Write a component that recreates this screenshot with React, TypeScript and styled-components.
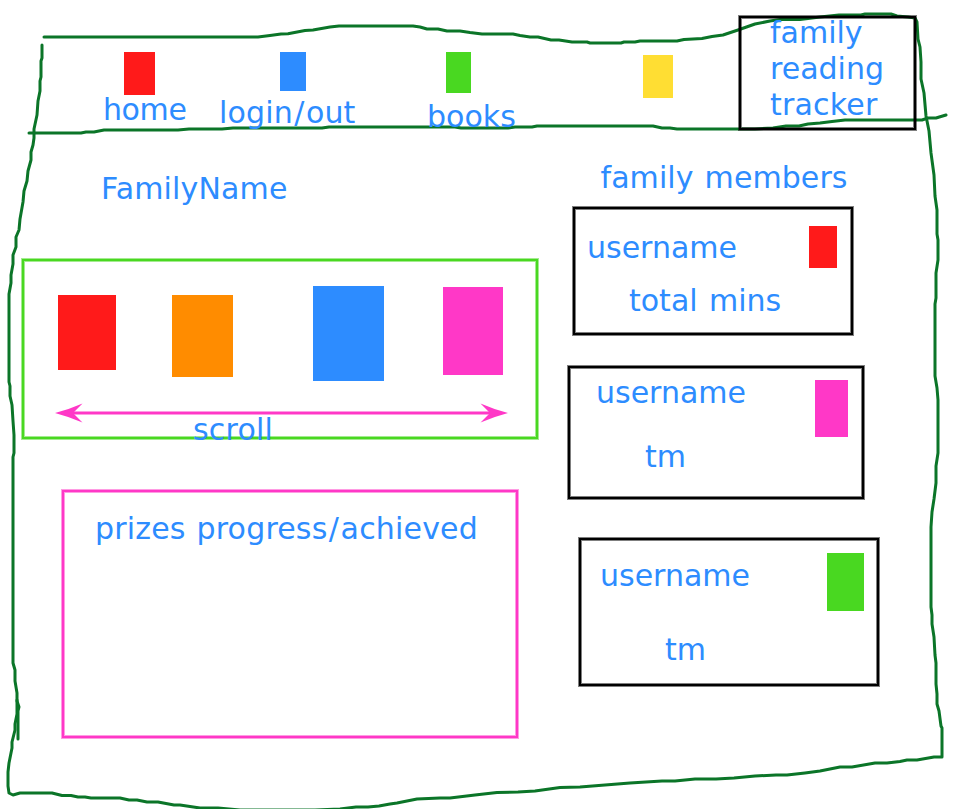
import React from "react";
import styled, { createGlobalStyle } from "styled-components";

const colors = {
  red: "#ff1a1a",
  blue: "#2d8cff",
  green: "#49d821",
  yellow: "#ffde33",
  orange: "#ff8c00",
  pink: "#ff38c7",
  forest: "#0b7528",
};

const GlobalStyle = createGlobalStyle`
  *, *::before, *::after { box-sizing: border-box; }
  body { margin: 0; background: #fff; overflow: hidden; }
`;

const Page = styled.div`
  position: relative;
  width: 966px;
  height: 809px;
  overflow: hidden;
  background: #fff;
  color: ${colors.blue};
  font: 30px/36px Verdana, "DejaVu Sans", sans-serif;
  white-space: nowrap;
`;

const SketchFrame = styled.svg`
  position: absolute;
  inset: 0;
  fill: none;
  stroke: ${colors.forest};
  stroke-width: 3;
  stroke-linecap: round;
  stroke-linejoin: round;
`;

const Header = styled.header`
  position: relative;
  display: flex;
  height: 130px;
  padding: 16px 50px 0 102px;
`;

const Nav = styled.nav`
  display: flex;
  align-items: flex-start;
  width: 637px;
  padding-top: 36px;
`;

const NavItem = styled.div<{ $width: number; $top?: number }>`
  display: flex;
  flex-direction: column;
  flex: none;
  width: ${(p) => p.$width}px;
  padding-top: ${(p) => p.$top ?? 0}px;
`;

const Swatch = styled.div<{
  $color: string;
  $w: number;
  $h: number;
  $left?: number;
  $top?: number;
}>`
  flex: none;
  width: ${(p) => p.$w}px;
  height: ${(p) => p.$h}px;
  margin: ${(p) => p.$top ?? 0}px 0 0 ${(p) => p.$left ?? 0}px;
  background: ${(p) => p.$color};
`;

const Label = styled.span<{ $left?: number; $top?: number; $track?: number; $word?: number }>`
  display: block;
  margin: ${(p) => p.$top ?? 0}px 0 0 ${(p) => p.$left ?? 0}px;
  letter-spacing: ${(p) => p.$track ?? 0}px;
  word-spacing: ${(p) => p.$word ?? 0}px;
`;

const Slash = styled.span`
  padding: 0 1.5px 0 1.3px;
`;

const Outline = styled.section<{
  $color: string;
  $soft: string;
  $w: number;
  $h: number;
}>`
  flex: none;
  width: ${(p) => p.$w}px;
  height: ${(p) => p.$h}px;
  border: 2px solid ${(p) => p.$color};
  box-shadow: 0 0 0 1px ${(p) => p.$soft}, inset 0 0 0 1px ${(p) => p.$soft};
`;

const Brand = styled(Outline)`
  padding: 0 0 0 29px;
`;

const BrandText = styled.div`
  margin-top: -3px;
`;

const Main = styled.main`
  position: relative;
  display: grid;
  grid-template-columns: 568px 1fr;
`;

const Left = styled.div`
  display: flex;
  flex-direction: column;
  align-items: flex-start;
  padding: 41px 0 0 22px;
`;

const Right = styled.div`
  display: flex;
  flex-direction: column;
  align-items: flex-start;
  padding-top: 30px;
`;

const Shelf = styled(Outline)`
  margin-top: 52px;
`;

const Books = styled.div`
  display: flex;
  align-items: flex-start;
  height: 118px;
  padding: 25px 0 0 34px;
`;

const Arrow = styled.svg`
  display: block;
  margin: 24px 0 0 31px;
`;

const Prizes = styled(Outline)`
  margin: 51px 0 0 40px;
  padding: 19px 0 0 31px;
`;

const Member = styled(Outline)<{ $left: number; $top: number }>`
  display: flex;
  justify-content: space-between;
  align-items: flex-start;
  margin: ${(p) => p.$top}px 0 0 ${(p) => p.$left}px;
`;

const MemberText = styled.div`
  display: flex;
  flex-direction: column;
`;

const MemberPhoto = styled.div<{ $right: number }>`
  padding-right: ${(p) => p.$right}px;
`;

const black = { $color: "#000", $soft: "rgba(0,0,0,.5)" };
const lime = { $color: colors.green, $soft: "rgba(73,216,33,.5)" };
const magenta = { $color: colors.pink, $soft: "rgba(255,56,199,.5)" };

const members = [
  { box: [280, 128, 5, 11], name: [12, 21], stat: ["total mins", 54, 17], photo: [colors.red, 28, 42, 17, 14] },
  { box: [296, 133, 0, 31], name: [26, 7], stat: ["tm", 75, 28], photo: [colors.pink, 33, 57, 12, 14] },
  { box: [300, 148, 11, 39], name: [19, 18], stat: ["tm", 84, 38], photo: [colors.green, 37, 58, 13, 13] },
] as const;

export default function App() {
  return (
    <Page>
      <GlobalStyle />
      <SketchFrame width="966" height="809" viewBox="0 0 966 809" aria-hidden="true">
        <path d="M44 37H258L270 35.5L281 34L288 33.8L305 30.5L313 30L330 27L339 26H413L420 27L427 29H438L447 31H460L470 32.5L482 34H513L520 35.5L530 37H538L551 40H559L572 42H587L590 43H621L624 42H635L640 41H677L684 39.5L702 38.5L712 36.5L723 35L738 30L755 24L770 21L780 19.5H800L820 17L839 15H861L865 14H891L897 16L908 17L915 18L917 22L918 39L920 47L921 62L921 79L924 93L926 116L929 131L931 153L934 175L935 196L937 210L937 234L938 240V260L936 273L936 298L935 304V376L937 388L938 400V453L936 466V483L934 499L932 512L931 527V607L932 615V624L934 637L935 655L936 663V684L937 694V704L939 711L941 726L942 728V757H934L917 760H907L900 761.5L887 763H875L852 767H840L830 769L820 771L805 773L787 775H776L755 776L734 778L716 779H695L675 781H662L630 783L580 787L560 787.5L535 791L518 792L497 792.5L475 795L450 798H440L417 799L397 803L390 804L379 806L368 807H356L340 809L315 810H240L218 808H200L180 805L174 805L158 802H147L137 800H129L120 798H91L85 797H78L71 795.5H62L52 793H20L13 795L9 793L8 786V772L9 763L12 748L12 742L15 730L15 724L17 714V700" />
        <path d="M42 45V58L41 61V77L40 81V91L38 101L37 115L34 129V138L33 145L31 152V160L28 171L27 181L24 191L23 202L20 219L19 230L16 237V247L13 255V264L11 275L11 283L9 294V382L10 386V396L12 405L13 421L14 435V453L13 457V663L15 670V681L17 693V701L19 707L18 711V739" />
        <path d="M29 133H81L86 132H94L104 130H178L189 129H222L233 128H322L329 127H455L461 128H508L515 127H532L537 126H653L662 128H670L677 129H755L773 128L786 126H799L808 124L820 123L832 121.5L845 120H922L928 118H936L946 115" />
      </SketchFrame>
      <Header>
        <Nav>
          <NavItem $width={117}>
            <Swatch $color={colors.red} $w={31} $h={43} $left={22} />
            <Label $left={1} $top={-3} $track={-0.4}>home</Label>
          </NavItem>
          <NavItem $width={208}>
            <Swatch $color={colors.blue} $w={26} $h={39} $left={61} />
            <Label $top={4} $track={0.15}>login<Slash>/</Slash>out</Label>
          </NavItem>
          <NavItem $width={216}>
            <Swatch $color={colors.green} $w={25} $h={41} $left={19} />
            <Label $top={6}>books</Label>
          </NavItem>
          <NavItem $width={30} $top={3}>
            <Swatch $color={colors.yellow} $w={30} $h={43} />
          </NavItem>
        </Nav>
        <Brand {...black} $w={177} $h={114}>
          <BrandText>
            <Label>family</Label>
            <Label>reading</Label>
            <Label $track={0.2}>tracker</Label>
          </BrandText>
        </Brand>
      </Header>
      <Main>
        <Left>
          <Label $left={79} $track={0.15}>FamilyName</Label>
          <Shelf {...lime} $w={516} $h={180}>
            <Books>
              <Swatch $color={colors.red} $w={58} $h={75} $top={9} />
              <Swatch $color={colors.orange} $w={61} $h={82} $left={56} $top={9} />
              <Swatch $color={colors.blue} $w={71} $h={95} $left={80} />
              <Swatch $color={colors.pink} $w={60} $h={88} $left={59} $top={1} />
            </Books>
            <Arrow width="453" height="20" viewBox="0 0 453 20" fill={colors.pink}>
              <path d="M17 10H436" stroke={colors.pink} strokeWidth="3" />
              <path d="M0 10Q15 6 27.5 .5L18 10L27.5 19.5Q15 14 0 10M453 10Q438 6 425.5 .5L435 10L425.5 19.5Q438 14 453 10" />
            </Arrow>
            <Label $left={169} $top={-11} $track={0.2}>scroll</Label>
          </Shelf>
          <Prizes {...magenta} $w={456} $h={248}>
            <Label $track={0.18} $word={1.2}>prizes progress<Slash>/</Slash>achieved</Label>
          </Prizes>
        </Left>
        <Right>
          <Label $left={32.5} $track={0.08} $word={1.4}>family members</Label>
          {members.map(({ box, name, stat, photo }, i) => (
            <Member key={i} {...black} $w={box[0]} $h={box[1]} $left={box[2]} $top={box[3]}>
              <MemberText>
                <Label $left={name[0]} $top={name[1]}>username</Label>
                <Label $left={stat[1]} $top={stat[2]} $word={1.8}>{stat[0]}</Label>
              </MemberText>
              <MemberPhoto $right={photo[4]}>
                <Swatch $color={photo[0]} $w={photo[1]} $h={photo[2]} $top={photo[3]} />
              </MemberPhoto>
            </Member>
          ))}
        </Right>
      </Main>
    </Page>
  );
}
